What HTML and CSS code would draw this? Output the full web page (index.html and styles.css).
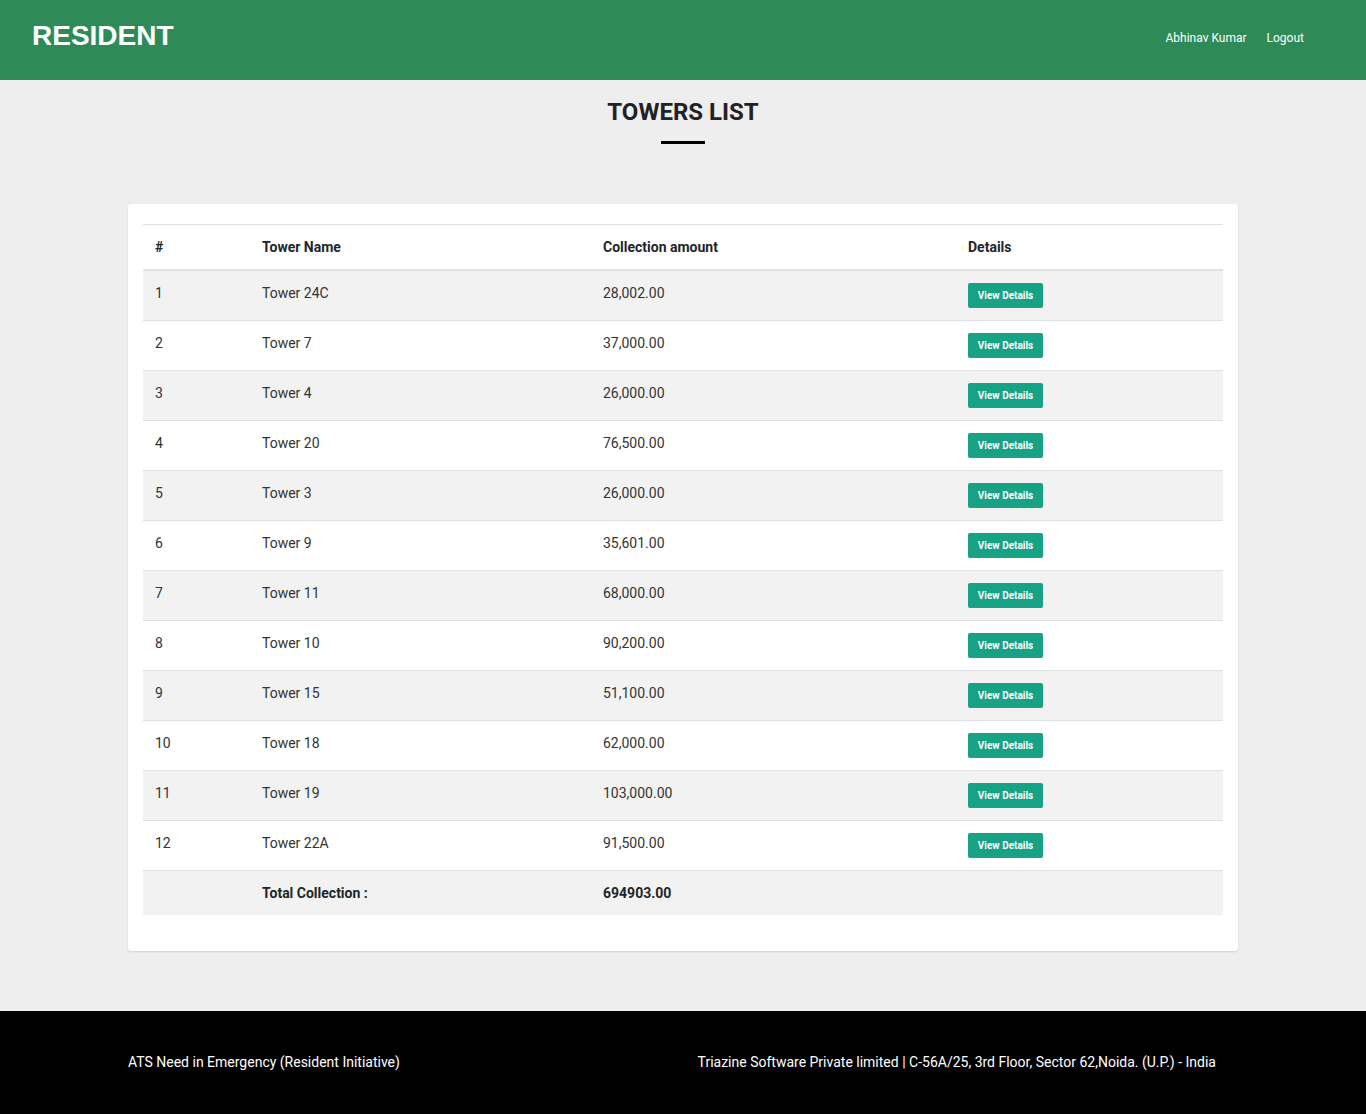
FILE: index.html
```html
<!DOCTYPE html>
<html>
<head>
<meta charset="utf-8">
<title>Towers List</title>
<link rel="stylesheet" href="styles.css">
</head>
<body>
<header class="topbar">
  <div class="logo">RESIDENT</div>
  <nav class="nav">
    <a href="#">Abhinav Kumar</a>
    <a href="#">Logout</a>
  </nav>
</header>
<main class="main">
  <h1 class="title">TOWERS LIST</h1>
  <div class="title-bar"></div>
  <section class="card">
    <table class="tbl">
      <colgroup>
        <col class="c1"><col class="c2"><col class="c3"><col class="c4">
      </colgroup>
      <thead>
        <tr><th>#</th><th>Tower Name</th><th>Collection amount</th><th>Details</th></tr>
      </thead>
      <tbody>
        <tr><td>1</td><td>Tower 24C</td><td>28,002.00</td><td><button class="btn">View Details</button></td></tr>
        <tr><td>2</td><td>Tower 7</td><td>37,000.00</td><td><button class="btn">View Details</button></td></tr>
        <tr><td>3</td><td>Tower 4</td><td>26,000.00</td><td><button class="btn">View Details</button></td></tr>
        <tr><td>4</td><td>Tower 20</td><td>76,500.00</td><td><button class="btn">View Details</button></td></tr>
        <tr><td>5</td><td>Tower 3</td><td>26,000.00</td><td><button class="btn">View Details</button></td></tr>
        <tr><td>6</td><td>Tower 9</td><td>35,601.00</td><td><button class="btn">View Details</button></td></tr>
        <tr><td>7</td><td>Tower 11</td><td>68,000.00</td><td><button class="btn">View Details</button></td></tr>
        <tr><td>8</td><td>Tower 10</td><td>90,200.00</td><td><button class="btn">View Details</button></td></tr>
        <tr><td>9</td><td>Tower 15</td><td>51,100.00</td><td><button class="btn">View Details</button></td></tr>
        <tr><td>10</td><td>Tower 18</td><td>62,000.00</td><td><button class="btn">View Details</button></td></tr>
        <tr><td>11</td><td>Tower 19</td><td>103,000.00</td><td><button class="btn">View Details</button></td></tr>
        <tr><td>12</td><td>Tower 22A</td><td>91,500.00</td><td><button class="btn">View Details</button></td></tr>
        <tr class="total"><td></td><td>Total Collection :</td><td>694903.00</td><td></td></tr>
      </tbody>
    </table>
  </section>
</main>
<footer class="footer">
  <div class="footer-inner">
    <span>ATS Need in Emergency (Resident Initiative)</span>
    <span class="footer-right">Triazine Software Private limited | C-56A/25, 3rd Floor, Sector 62,Noida. (U.P.) - India</span>
  </div>
</footer>
</body>
</html>
```
FILE: styles.css
```css
* { box-sizing: border-box; }
html, body { margin: 0; padding: 0; }
body {
  background: #eeeeee;
  font-family: Roboto, "Liberation Sans", sans-serif;
  color: #212529;
}
.topbar {
  height: 80px;
  background: #2e8b57;
  display: flex;
  align-items: center;
  justify-content: space-between;
  padding: 0 62px 0 32px;
}
.logo {
  font-family: "Liberation Sans", Arial, sans-serif;
  font-weight: bold;
  font-size: 28px;
  color: #fff;
  margin-top: -9px;
}
.nav {
  display: flex;
  gap: 20px;
  margin-top: -5px;
}
.nav a {
  color: #fff;
  text-decoration: none;
  font-size: 12px;
}
.main {
  padding-bottom: 60px;
}
.title {
  margin: 0;
  padding-top: 16px;
  text-align: center;
  font-size: 24px;
  font-weight: 700;
  color: #222;
  line-height: 32px;
}
.title-bar {
  width: 44px;
  height: 3px;
  background: #000;
  margin: 13px auto 0;
}
.card {
  width: 1110px;
  margin: 60px auto 0;
  background: #fff;
  border-radius: 3px;
  box-shadow: 0 1px 2px rgba(0,0,0,0.12);
  padding: 20px 15px 36px;
}
.tbl {
  width: 100%;
  border-collapse: collapse;
  font-size: 14px;
  table-layout: fixed;
}
.c1 { width: 107px; }
.c2 { width: 341px; }
.c3 { width: 365px; }
.c4 { width: 267px; }
.tbl th, .tbl td {
  text-align: left;
  vertical-align: top;
  padding: 12px 12px 11px;
  line-height: 20px;
  border-top: 1px solid #dee2e6;
}
.tbl th {
  font-weight: 700;
  color: #212529;
  padding-bottom: 12px;
  border-bottom: 2px solid #dee2e6;
}
.tbl td { color: #333; }
.tbl tbody tr:nth-child(odd) { background: #f2f2f2; }
.tbl tr.total td { font-weight: 700; color: #212529; padding-bottom: 12px; }
.btn {
  display: block;
  width: 75px;
  height: 25px;
  margin: 0 0 1px;
  padding: 0;
  border: 0;
  border-radius: 2px;
  background: #17a185;
  color: #fff;
  font-family: Roboto, "Liberation Sans", sans-serif;
  font-size: 10px;
  font-weight: 700;
  cursor: pointer;
}
.footer {
  background: #000;
  height: 103px;
  color: #fff;
  font-size: 14px;
}
.footer-inner {
  width: 1110px;
  margin: 0 auto;
  display: flex;
  justify-content: space-between;
  padding: 41px 22px 0 0;
  line-height: 20px;
}
```
